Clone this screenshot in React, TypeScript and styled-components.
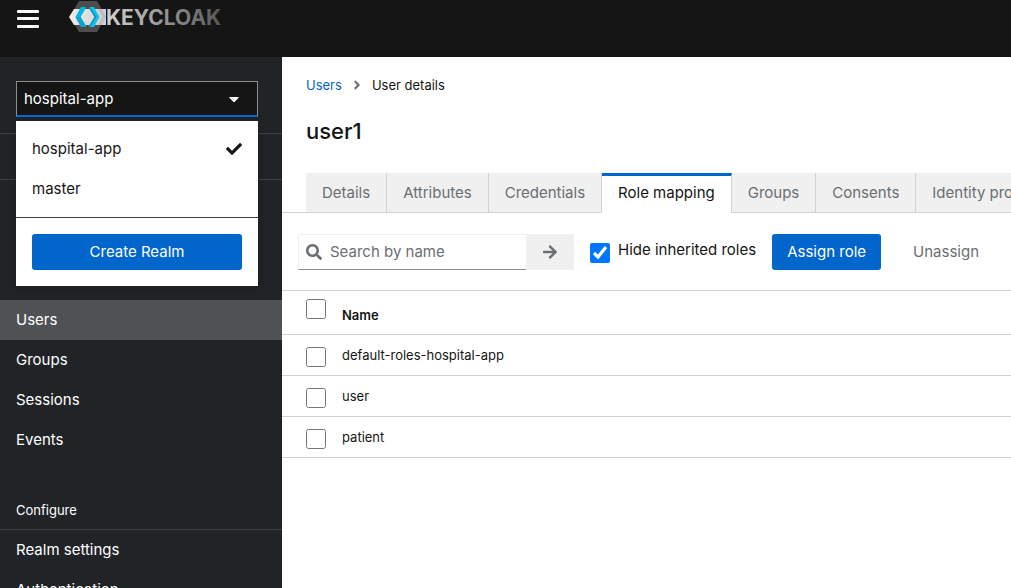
import React, { useState } from "react";
import styled, { createGlobalStyle } from "styled-components";
import {
  FaAngleRight,
  FaArrowRight,
  FaCaretDown,
  FaCheck,
  FaSearch,
} from "react-icons/fa";

const GlobalStyle = createGlobalStyle`
  *, *::before, *::after { box-sizing: border-box; }
  body {
    margin: 0;
    background: #fff;
    color: #151515;
    font-family: "Inter", "Liberation Sans", sans-serif;
    font-size: 15px;
    line-height: 24px;
  }
  button, input { font: inherit; }
`;

const Page = styled.div`
  display: flex;
  flex-direction: column;
  height: 100vh;
  overflow: hidden;
`;

const Masthead = styled.header`
  display: flex;
  align-items: flex-start;
  flex: none;
  gap: 28px;
  padding: 0 16px 19px;
  background: #151515;
`;

const MenuToggle = styled.button`
  display: flex;
  padding: 8px 0;
  border: 0;
  background: none;
  color: #fff;
`;

const Brand = styled.a`
  display: flex;
`;

const Columns = styled.div`
  display: flex;
  flex: 1;
  min-height: 0;
`;

const Sidebar = styled.aside`
  flex: none;
  width: 282px;
  background: #212427;
  color: #fff;
`;

const RealmArea = styled.div`
  position: relative;
  padding: 24px 24px 16px 16px;
  border-bottom: 1px solid #3c3f42;
`;

const RealmToggle = styled.button`
  display: flex;
  align-items: center;
  justify-content: space-between;
  width: 100%;
  height: 36px;
  padding: 0 15px 0 7px;
  border: 1px solid #8a8d90;
  border-bottom: 2px solid #06c;
  background: #151515;
  color: #fff;
  text-align: left;
`;

const RealmMenu = styled.div`
  position: absolute;
  z-index: 1;
  top: 64px;
  left: 16px;
  right: 24px;
  padding-top: 8px;
  background: #fff;
  box-shadow: 0 4px 8px rgba(3, 3, 3, 0.12), 0 0 4px rgba(3, 3, 3, 0.06);
`;

const RealmOption = styled.button`
  display: flex;
  align-items: center;
  justify-content: space-between;
  width: 100%;
  height: 40px;
  padding: 0 16px;
  border: 0;
  background: none;
  color: #151515;
`;

const RealmFooter = styled.div`
  margin-top: 8px;
  padding: 16px;
  border-top: 1px solid #3c3f42;
`;

const PrimaryButton = styled.button<{ $block?: boolean }>`
  width: ${(p) => (p.$block ? "100%" : "auto")};
  height: 36px;
  padding: 0 15px;
  border: 0;
  border-radius: 3px;
  background: #06c;
  color: #fff;
  white-space: nowrap;
`;

const NavSection = styled.section`
  & + & { padding-top: 28px; }
`;

const NavHeading = styled.h2`
  margin: 0;
  padding: 10px 16px 7px;
  border-bottom: 1px solid #3c3f42;
  font-size: 13px;
  font-weight: 400;

  &:empty { height: 46px; }
`;

const NavList = styled.ul<{ $offset?: boolean }>`
  margin: 0;
  padding: ${(p) => (p.$offset ? "120px" : "0")} 0 0;
  list-style: none;
`;

const NavLink = styled.a<{ $current?: boolean }>`
  display: block;
  padding: 8px 16px;
  background: ${(p) => (p.$current ? "#4f5255" : "transparent")};
  color: #fff;
  text-decoration: none;
`;

const Main = styled.main`
  flex: 1;
  min-width: 0;
  overflow: hidden;
`;

const Intro = styled.div`
  padding: 16px 24px 24px;
`;

const Breadcrumb = styled.nav`
  display: flex;
  align-items: center;
  gap: 8px;
  font-size: 13px;

  a { color: #06c; text-decoration: none; }
  svg { color: #6a6e73; }
`;

const Title = styled.h1`
  margin: 16px 0 0;
  font-size: 22px;
  font-weight: 500;
  line-height: 36px;
`;

const Tabs = styled.div`
  display: flex;
  padding-left: 24px;
  box-shadow: inset 0 -1px #d2d2d2;
`;

const Tab = styled.button<{ $active?: boolean }>`
  flex: none;
  height: 40px;
  padding: ${(p) => (p.$active ? "0 16px 3px" : "0 16px")};
  border: 0 solid #d2d2d2;
  border-right-width: 1px;
  border-bottom-width: ${(p) => (p.$active ? "0" : "1px")};
  border-top: ${(p) => (p.$active ? "3px solid #06c" : "0")};
  background: ${(p) => (p.$active ? "#fff" : "#f0f0f0")};
  color: ${(p) => (p.$active ? "#151515" : "#6a6e73")};
`;

const Toolbar = styled.div`
  display: flex;
  align-items: center;
  gap: 16px;
  padding: 21px 16px 20px;
`;

const SearchGroup = styled.form`
  display: flex;
  width: 276px;
  height: 36px;
`;

const SearchBox = styled.label`
  display: flex;
  align-items: center;
  flex: 1;
  gap: 8px;
  min-width: 0;
  padding: 0 7px;
  border: 1px solid #f0f0f0;
  border-right: 0;
  border-bottom-color: #8a8d90;
  color: #6a6e73;

  svg { flex: none; }
`;

const SearchInput = styled.input`
  flex: 1;
  min-width: 0;
  padding: 0;
  border: 0;
  outline: 0;
  background: none;
  color: #151515;

  &::placeholder { color: #6a6e73; opacity: 1; }
`;

const SearchButton = styled.button`
  display: flex;
  align-items: center;
  justify-content: center;
  width: 48px;
  border: 0;
  background: #f0f0f0;
  color: #6a6e73;
`;

const Check = styled.input`
  display: block;
  flex: none;
  width: 20px;
  height: 20px;
  margin: 0;
`;

const HideLabel = styled.label`
  display: flex;
  align-items: flex-start;
  gap: 8px;
  padding-bottom: 3px;
  white-space: nowrap;

  input { margin-top: 5px; }
`;

const PlainButton = styled.button`
  height: 36px;
  padding: 0 16px;
  border: 0;
  background: none;
  color: #6a6e73;
`;

const RoleTable = styled.table`
  width: 100%;
  border-collapse: collapse;
  border-top: 1px solid #d2d2d2;
  font-size: 13px;
  line-height: 20px;
  text-align: left;

  tr { border-bottom: 1px solid #d2d2d2; }
  td { padding: 10px 8px; vertical-align: top; }
  th { padding: 14px 8px 9px; font-weight: 600; vertical-align: top; }
  td:first-child { width: 52px; padding: 12px 8px 8px 24px; }
  th:first-child { width: 52px; padding: 8px 8px 15px 24px; }
`;

function KeycloakLogo() {
  return (
    <svg width="154" height="33" viewBox="0 0 154 33" role="img" aria-label="Keycloak">
      <defs>
        <linearGradient id="word" gradientUnits="userSpaceOnUse" x1="38" y1="0" x2="153" y2="0">
          <stop offset="0" stopColor="#d2d2d2" />
          <stop offset="0.5" stopColor="#969696" />
          <stop offset="1" stopColor="#585858" />
        </linearGradient>
        <linearGradient id="band" x1="0" y1="0" x2="1" y2="0">
          <stop offset="0" stopColor="#ededed" />
          <stop offset="1" stopColor="#cfcfcf" />
        </linearGradient>
      </defs>
      <path d="M11 1h18l9 15.500-9 15.500H11L2 16.500z" fill="#4d4d4d" />
      <path d="M6 9h32v16H6L1 17z" fill="url(#band)" />
      <path d="M30 9h4l4 8-4 8h-4l4-8z" fill="#bfbfbf" />
      <path d="M13 7h4l1 1-5.500 9L18 26l-1 1h-4L7.500 17z" fill="#00b8e3" />
      <path d="M7.500 17h5L18 26l-1 1h-4z" fill="#0ba5cf" />
      <path d="M22 7h4l5.500 10L26 27h-4l-1-1 5.500-9L21 8z" fill="#12c0ea" />
      <path d="M22 7l-1 1 5.500 9L21 26l1 1 6.500-10z" fill="#0a95be" />
      <text x="38" y="25" fill="url(#word)" fontFamily="Inter, sans-serif" fontSize="21" fontWeight="700">
        KEYCLOAK
      </text>
    </svg>
  );
}

const manageItems = ["Users", "Groups", "Sessions", "Events"];
const configureItems = ["Realm settings", "Authentication"];
const tabs = ["Details", "Attributes", "Credentials", "Role mapping", "Groups", "Consents", "Identity provider links"];
const roles = ["default-roles-hospital-app", "user", "patient"];

export default function App() {
  const [hideInherited, setHideInherited] = useState(true);

  return (
    <Page>
      <GlobalStyle />
      <Masthead>
        <MenuToggle aria-label="Global navigation">
          <svg width="24" height="22" viewBox="0 0 24 22" fill="currentColor" aria-hidden="true">
            <rect x="1" y="2" width="22" height="3" rx="1" />
            <rect x="1" y="9" width="22" height="3" rx="1" />
            <rect x="1" y="17" width="22" height="3" rx="1" />
          </svg>
        </MenuToggle>
        <Brand href="#">
          <KeycloakLogo />
        </Brand>
      </Masthead>
      <Columns>
        <Sidebar>
          <RealmArea>
            <RealmToggle aria-expanded="true" aria-haspopup="menu">
              hospital-app
              <FaCaretDown size={16} aria-hidden="true" />
            </RealmToggle>
            <RealmMenu>
              <RealmOption>
                hospital-app
                <FaCheck size={16} aria-hidden="true" />
              </RealmOption>
              <RealmOption>master</RealmOption>
              <RealmFooter>
                <PrimaryButton $block>Create Realm</PrimaryButton>
              </RealmFooter>
            </RealmMenu>
          </RealmArea>
          <nav aria-label="Realm">
            <NavSection>
              <NavHeading aria-hidden="true" />
              <NavList $offset>
                {manageItems.map((item) => (
                  <li key={item}>
                    <NavLink href="#" $current={item === "Users"}>{item}</NavLink>
                  </li>
                ))}
              </NavList>
            </NavSection>
            <NavSection>
              <NavHeading>Configure</NavHeading>
              <NavList>
                {configureItems.map((item) => (
                  <li key={item}>
                    <NavLink href="#">{item}</NavLink>
                  </li>
                ))}
              </NavList>
            </NavSection>
          </nav>
        </Sidebar>
        <Main>
          <Intro>
            <Breadcrumb aria-label="Breadcrumb">
              <a href="#">Users</a>
              <FaAngleRight size={14} aria-hidden="true" />
              <span>User details</span>
            </Breadcrumb>
            <Title>user1</Title>
          </Intro>
          <Tabs role="tablist">
            {tabs.map((tab) => (
              <Tab key={tab} role="tab" $active={tab === "Role mapping"} aria-selected={tab === "Role mapping"}>
                {tab}
              </Tab>
            ))}
          </Tabs>
          <Toolbar>
            <SearchGroup onSubmit={(event) => event.preventDefault()}>
              <SearchBox>
                <FaSearch size={16} aria-hidden="true" />
                <SearchInput type="text" placeholder="Search by name" aria-label="Search by name" />
              </SearchBox>
              <SearchButton aria-label="Search">
                <FaArrowRight size={16} aria-hidden="true" />
              </SearchButton>
            </SearchGroup>
            <HideLabel>
              <Check
                type="checkbox"
                checked={hideInherited}
                onChange={(event) => setHideInherited(event.target.checked)}
              />
              <span>Hide inherited roles</span>
            </HideLabel>
            <PrimaryButton>Assign role</PrimaryButton>
            <PlainButton>Unassign</PlainButton>
          </Toolbar>
          <RoleTable>
            <thead>
              <tr>
                <th><Check type="checkbox" aria-label="Select all rows" /></th>
                <th>Name</th>
              </tr>
            </thead>
            <tbody>
              {roles.map((role) => (
                <tr key={role}>
                  <td><Check type="checkbox" aria-label={`Select ${role}`} /></td>
                  <td>{role}</td>
                </tr>
              ))}
            </tbody>
          </RoleTable>
        </Main>
      </Columns>
    </Page>
  );
}
